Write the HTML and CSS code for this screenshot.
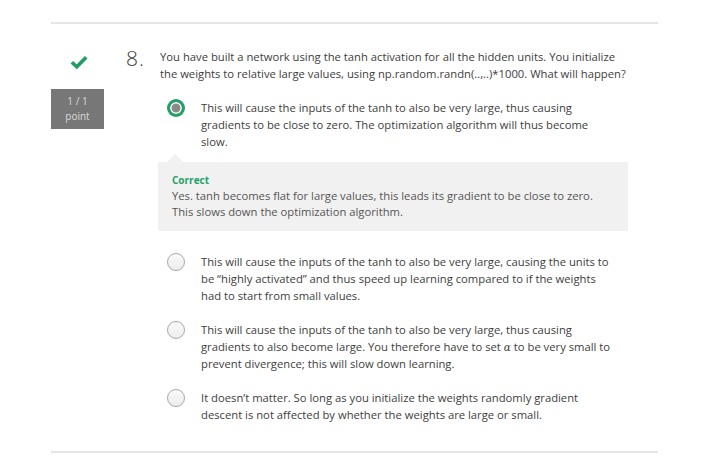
FILE: index.html
```html
<!DOCTYPE html>
<html lang="en">
<head>
<meta charset="utf-8">
<title>Quiz question 8</title>
<link rel="stylesheet" href="styles.css">
</head>
<body>
<div class="quiz">
  <div class="question">
    <div class="status">
      <svg class="check" width="18" height="14" viewBox="0 0 18 14" aria-hidden="true">
        <path d="M1.8 7.2 L6.8 11.8 L16.2 2.2" fill="none" stroke="#1f9d66" stroke-width="3.6" stroke-linejoin="miter"/>
      </svg>
      <div class="score">
        <span>1 / 1</span>
        <span>point</span>
      </div>
    </div>
    <div class="number">8.</div>
    <div class="body">
      <p class="prompt">You have built a network using the tanh activation for all the hidden units. You initialize the weights to relative large values, using np.random.randn(..,..)*1000. What will happen?</p>
      <div class="options">
        <div class="option">
          <span class="radio selected"></span>
          <p class="opt-text">This will cause the inputs of the tanh to also be very large, thus causing gradients to be close to zero. The optimization algorithm will thus become slow.</p>
        </div>
        <div class="feedback">
          <div class="fb-title">Correct</div>
          <p class="fb-text">Yes. tanh becomes flat for large values, this leads its gradient to be close to zero. This slows down the optimization algorithm.</p>
        </div>
        <div class="option">
          <span class="radio"></span>
          <p class="opt-text">This will cause the inputs of the tanh to also be very large, causing the units to be “highly activated” and thus speed up learning compared to if the weights had to start from small values.</p>
        </div>
        <div class="option">
          <span class="radio"></span>
          <p class="opt-text">This will cause the inputs of the tanh to also be very large, thus causing gradients to also become large. You therefore have to set <span class="math">α</span> to be very small to prevent divergence; this will slow down learning.</p>
        </div>
        <div class="option">
          <span class="radio"></span>
          <p class="opt-text">It doesn’t matter. So long as you initialize the weights randomly gradient descent is not affected by whether the weights are large or small.</p>
        </div>
      </div>
    </div>
  </div>
</div>
</body>
</html>
```
FILE: styles.css
```css
html, body {
  margin: 0;
  padding: 0;
  background: #ffffff;
}
body {
  font-family: "Open Sans", "DejaVu Sans", sans-serif;
  font-size: 11.25px;
  line-height: 17px;
  color: #3d3d3d;
}
.quiz {
  margin: 22px 58px 0 51px;
  border-top: 2px solid #e6e6e6;
  border-bottom: 2px solid #e6e6e6;
  padding: 24px 0 28px;
}
.question {
  display: flex;
  align-items: flex-start;
}
.status {
  width: 53px;
  display: flex;
  flex-direction: column;
  align-items: center;
}
.check {
  display: block;
  margin-top: 7px;
  margin-left: 2px;
}
.score {
  margin-top: 20px;
  width: 53px;
  height: 40px;
  background: #777777;
  color: #d9d9d9;
  font-size: 10px;
  line-height: 15px;
  display: flex;
  flex-direction: column;
  align-items: center;
  justify-content: center;
}
.number {
  width: 34px;
  padding-left: 22px;
  font-size: 21px;
  font-weight: 300;
  line-height: 20px;
  color: #3d3d3d;
  letter-spacing: 1px;
}
.body {
  width: 468px;
}
.prompt {
  margin: 0;
}
.options {
  margin-top: 17px;
  display: flex;
  flex-direction: column;
}
.option {
  display: flex;
  align-items: flex-start;
  margin-left: 7px;
  padding-right: 13px;
}
.option + .option {
  margin-top: 17px;
}
.radio {
  flex: none;
  width: 16px;
  height: 16px;
  border: 1px solid #a8a8a8;
  border-radius: 50%;
  background: linear-gradient(#fbfbfb, #ececec);
  margin-right: 16px;
  margin-top: 0;
}
.radio.selected {
  width: 12px;
  height: 12px;
  border: 3px solid #21a168;
  background: #8a8a8a;
  box-shadow: inset 0 0 0 1.5px #ffffff;
}
.opt-text {
  margin: 0;
}
.math {
  font-family: "DejaVu Serif", serif;
  font-style: italic;
  font-size: 10.5px;
  line-height: 1;
}
.feedback {
  position: relative;
  margin: 12px 0 22px -2px;
  background: #f1f1f1;
  padding: 11px 14px 11px;
}
.feedback::before {
  content: "";
  position: absolute;
  top: -8px;
  left: 9px;
  border-left: 8px solid transparent;
  border-right: 8px solid transparent;
  border-bottom: 8px solid #f1f1f1;
}
.fb-title {
  color: #1fa36a;
  font-weight: 700;
  font-size: 10px;
  line-height: 15px;
}
.fb-text {
  margin: 0;
  color: #555555;
  line-height: 16px;
}
```
